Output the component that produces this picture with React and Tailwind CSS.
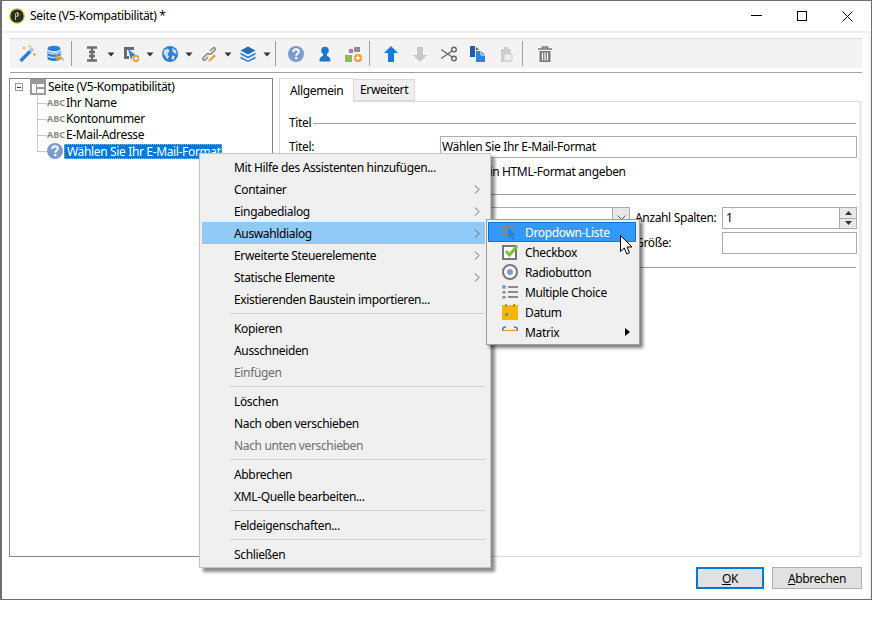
import React from "react";

const Svg = ({ children, w = 16, h = 16, className = "" }) => (
  <svg width={w} height={h} viewBox={`0 0 ${w} ${h}`} className={`block shrink-0 ${className}`}>{children}</svg>
);

const Caret = () => (
  <Svg w={8} h={5} className="mt-px"><path d="M0.5 0.5H7.5L4 4.5Z" fill="#333" /></Svg>
);

const Sep = ({ ml }) => <div className={`w-px h-[25px] bg-[#a0a0a0] shrink-0 ${ml}`} />;

const Wand = () => (
  <Svg w={18} h={18}>
    <path d="M1.5 16L11.5 6" stroke="#2b7cd3" strokeWidth="3.4" />
    <path d="M11 6.5L14 3.5" stroke="#9fc6ee" strokeWidth="3.4" />
    <path d="M5 1.5v3M3.5 3h3M15.5 8v3M14 9.5h3M11 0.5v2M10 1.5h2" stroke="#f0a23a" strokeWidth="1" />
  </Svg>
);
const DbBack = () => (
  <Svg w={18} h={18}>
    <ellipse cx="7" cy="3.5" rx="6.5" ry="2.8" fill="#2d7fd0" />
    <path d="M0.5 5V13.5C0.5 15 3.5 16 7 16S13.5 15 13.5 13.5V5C13 7 10 7.8 7 7.8S1 7 0.5 5Z" fill="#2d7fd0" />
    <path d="M1 7.5C3 9.5 11 9.5 13 7.5M1 11C3 13 11 13 13 11" stroke="#fff" strokeWidth="1" fill="none" />
    <path d="M17 16.5C17 12.5 14 11.5 11 11.5V9L7 12.5L11 16V13.8C13.5 13.8 15.5 14.5 17 16.5Z" fill="#ef9a2d" />
  </Svg>
);
const IBeam = () => (
  <Svg><path d="M3 1.5H13M3 14.5H13M8 1.5V14.5M5 6H11M5 10H11" stroke="#6d6d6d" strokeWidth="2.4" fill="none" /></Svg>
);
const Widget = () => (
  <Svg>
    <path d="M1 1H11V4H4V10H6V13H1Z" fill="#6a6a6a" />
    <path d="M5 3L13 9.5L9.5 10L8 14Z" fill="#2d7fd0" />
    <circle cx="13" cy="12.5" r="2.6" fill="none" stroke="#ef9a2d" strokeWidth="1.8" />
  </Svg>
);
const Globe = () => (
  <Svg>
    <circle cx="8" cy="8" r="8" fill="#2d7fd0" />
    <path d="M2 4L6 2.5L7.5 5L5.5 8L7 11L5 13.5L3.5 10L1.5 8ZM10 2L14 4.5L14.5 8L12 7L10.5 5ZM10 9.5L13 10L11.5 14L9.5 13Z" fill="#cfe2f5" />
  </Svg>
);
const LinkIcon = () => (
  <Svg>
    <path d="M9 5L12 2C13.2 1 15 2.8 14 4L10.5 7.5C9.5 8.5 8.5 8 8 7.5M7 11L4 14C2.8 15 1 13.2 2 12L5.5 8.5C6.5 7.5 7.5 8 8 8.5" stroke="#8a8a8a" strokeWidth="1.6" fill="none" />
    <path d="M7 15L13 8.5L15 10L9 15.5Z" fill="#ef9a2d" />
  </Svg>
);
const Layers = () => (
  <Svg>
    <path d="M8 0.5L15.5 4.5L8 8.5L0.5 4.5Z" fill="#1f6fb8" />
    <path d="M0.5 6.5L8 10.5L15.5 6.5V8.5L8 12.5L0.5 8.5Z" fill="#2d7fd0" />
    <path d="M0.5 10.5L8 14.5L15.5 10.5V12.5L8 16L0.5 12.5Z" fill="#2d7fd0" />
  </Svg>
);
const Help = () => (
  <Svg>
    <circle cx="8" cy="8" r="8" fill="#7c9dcb" />
    <path d="M5.3 6C5.3 4 6.5 3.2 8 3.2S10.8 4.1 10.8 5.8C10.8 7.6 8.2 7.6 8.2 9.8" stroke="#fff" strokeWidth="1.9" fill="none" />
    <rect x="7.1" y="11" width="2.2" height="2.2" fill="#fff" />
  </Svg>
);
const Person = () => (
  <Svg>
    <circle cx="8" cy="4.5" r="3.8" fill="#1f78c8" />
    <path d="M6 8H10V10C12 10.5 13.5 11.5 13.5 15.5H2.5C2.5 11.5 4 10.5 6 10Z" fill="#1f78c8" />
  </Svg>
);
const Shapes = () => (
  <Svg w={18} h={16}>
    <rect x="0" y="9" width="7" height="7" fill="#8cc04b" />
    <path d="M4 3H8V7H4Z" fill="#b06fd0" />
    <path d="M9 1H15V6H9Z" fill="#8e8e8e" />
    <circle cx="13" cy="12" r="4" fill="#ef9a2d" />
    <path d="M10.5 12H15.5M13 9.5V14.5" stroke="#fff" strokeWidth="1.4" />
  </Svg>
);
const Arrow = ({ color, down }) => (
  <Svg>
    <path d={down ? "M5 1H11V9H15L8 16L1 9H5Z" : "M8 0L15 7H11V16H5V7H1Z"} fill={color} />
  </Svg>
);
const Scissors = () => (
  <Svg>
    <circle cx="13" cy="3.5" r="2.3" fill="none" stroke="#666" strokeWidth="1.4" />
    <circle cx="13" cy="12.5" r="2.3" fill="none" stroke="#666" strokeWidth="1.4" />
    <path d="M0 3.5L11.2 11M0 12.5L11.2 5" stroke="#666" strokeWidth="1.4" />
  </Svg>
);
const Copy = () => (
  <Svg>
    <path d="M0 0H5V11H0Z" fill="#1f5fa8" />
    <path d="M6 1L9 4H6Z" fill="#1f5fa8" />
    <path d="M6 5H11L15 9V16H6Z" fill="#2d84d8" />
    <path d="M11 5V9H15" stroke="#fff" fill="none" />
  </Svg>
);
const Paste = () => (
  <Svg>
    <path d="M2 3H5V1H9V3H12V16H2Z" fill="#cdcdcd" />
    <path d="M5 8H13V15H5Z" fill="#eeeeee" stroke="#cdcdcd" />
  </Svg>
);
const Trash = () => (
  <Svg>
    <path d="M1 3H15M5.5 3V1H10.5V3" stroke="#7a7a7a" strokeWidth="1.6" fill="none" />
    <path d="M2.5 5H13.5V16H2.5Z" fill="#7a7a7a" />
    <path d="M5.5 6.5V14.5M8 6.5V14.5M10.5 6.5V14.5" stroke="#fff" strokeWidth="1.2" />
  </Svg>
);

const Slot = ({ children }) => <div className="w-[29px] flex justify-center shrink-0">{children}</div>;
const DropTool = ({ children }) => (
  <div className="flex items-center gap-[7px] w-[31px] shrink-0">{children}<Caret /></div>
);

const Toolbar = () => (
  <div className="ml-[8px] mr-[7px] mt-[5px] h-[30px] bg-[#f3f3f3] border-t border-[#d9d9d9] flex items-center pl-[3px]">
    <Slot><Wand /></Slot>
    <div className="-ml-px"><Slot><DbBack /></Slot></div>
    <Sep ml="ml-[1px]" />
    <div className="flex items-center gap-[8px] ml-[12px]">
      <DropTool><IBeam /></DropTool>
      <DropTool><Widget /></DropTool>
      <DropTool><Globe /></DropTool>
      <DropTool><LinkIcon /></DropTool>
      <DropTool><Layers /></DropTool>
    </div>
    <Sep ml="ml-[4px]" />
    <div className="flex items-center ml-[5px]">
      <Slot><Help /></Slot>
      <Slot><Person /></Slot>
      <Slot><Shapes /></Slot>
    </div>
    <Sep ml="ml-[1px]" />
    <div className="flex items-center ml-[6px]">
      <Slot><Arrow color="#1f78d1" /></Slot>
      <Slot><Arrow color="#c8c8c8" down /></Slot>
      <Slot><Scissors /></Slot>
      <Slot><Copy /></Slot>
      <Slot><Paste /></Slot>
    </div>
    <Sep ml="ml-[1px]" />
    <div className="ml-[7px]"><Slot><Trash /></Slot></div>
  </div>
);

const Abc = () => (
  <span className="w-[16px] text-[9px] font-bold text-[#8a8a8a] tracking-[0px] shrink-0 leading-[16px]">ABC</span>
);

const TreeIcon = () => (
  <svg width="16" height="16" viewBox="0 0 16 16" className="block shrink-0">
    <rect width="16" height="16" fill="#999" />
    <rect x="2" y="5" width="12" height="9" fill="#fff" />
    <rect x="7" y="8" width="7" height="2" fill="#999" />
    <rect x="6" y="5" width="1" height="9" fill="#999" />
  </svg>
);

const Tree = () => (
  <div className="relative w-[264px] h-[479px] border border-[#828790] bg-white shrink-0">
    <div className="absolute left-[27px] top-[15px] w-px h-[57px] bg-[#c8c8c8]" />
    <div className="flex items-center h-[16px] pl-[5px]">
      <div className="w-[8px] h-[8px] border border-[#8e9fb5] flex items-center justify-center mr-[7px] shrink-0">
        <div className="w-[4px] h-px bg-[#333]" />
      </div>
      <TreeIcon />
      <span className="ml-[2px]">Seite (V5-Kompatibilität)</span>
    </div>
    {["Ihr Name", "Kontonummer", "E-Mail-Adresse"].map((t) => (
      <div key={t} className="flex items-center h-[16px] pl-[27px]">
        <div className="w-[10px] h-px bg-[#c8c8c8] shrink-0" />
        <Abc />
        <span className="ml-[3px]">{t}</span>
      </div>
    ))}
    <div className="flex items-center h-[16px] pl-[27px]">
      <div className="w-[10px] h-px bg-[#c8c8c8] shrink-0" />
      <Help />
      <span className="ml-px h-[15px] leading-[13px] pl-[2px] w-[158px] shrink-0 bg-[#0078d7] text-white border border-dotted border-[#ffffff80] whitespace-nowrap">Wählen Sie Ihr E-Mail-Format</span>
    </div>
  </div>
);

const Legend = ({ children, className = "" }) => (
  <div className={`flex items-center gap-[2px] mr-[3px] ${className}`}>
    <span>{children}</span>
    <div className="flex-1 h-px bg-[#a0a0a0]" />
  </div>
);

const Field = ({ children, className = "" }) => (
  <div className={`h-[22px] border border-[#ababab] bg-white pl-[1px] leading-[19px] ${className}`}>{children}</div>
);

const Panel = () => (
  <div className="flex-1 flex flex-col min-w-0">
    <div className="flex items-end h-[24px] -mb-px relative z-10">
      <div className="w-[75px] h-[24px] bg-white border border-b-0 border-[#d9d9d9] pl-[10px] leading-[23px]">Allgemein</div>
      <div className="w-[61px] h-[22px] bg-[#f0f0f0] border border-l-0 border-[#d9d9d9] pl-[6px] leading-[20px] mb-px">Erweitert</div>
    </div>
    <div className="h-[456px] border border-[#d9d9d9] border-r-[3px] border-r-[#ececec] bg-white pl-[9px] pt-[13px]">
      <Legend className="h-[16px]">Titel</Legend>
      <div className="flex items-center h-[22px] mt-[5px] mr-[2px]">
        <span className="w-[151px]">Titel:</span>
        <Field className="flex-1">Wählen Sie Ihr E-Mail-Format</Field>
      </div>
      <div className="h-[16px] mt-[5px] pl-[151px]">
        <span className="pl-[25px]">Text in HTML-Format angeben</span>
      </div>
      <div className="h-px bg-[#a0a0a0] mt-[15px] mr-[3px]" />
      <div className="flex items-center h-[22px] mt-[12px] mr-[2px]">
        <Field className="flex-1 relative mr-[5px] ml-[151px]">
          <div className="absolute right-0 top-0 bottom-0 w-[17px] bg-[#e8e8e8] border-l border-[#ababab] flex items-center justify-center">
            <svg width="9" height="6" viewBox="0 0 9 6"><path d="M0.5 0.5L4.5 4.5L8.5 0.5" stroke="#555" fill="none" /></svg>
          </div>
        </Field>
        <span className="w-[87px] shrink-0">Anzahl Spalten:</span>
        <Field className="w-[135px] shrink-0 relative pl-[3px]">
          1
          <div className="absolute right-0 top-0 bottom-0 w-[17px] flex flex-col border-l border-[#ababab] bg-[#e8e8e8]">
            <div className="flex-1 flex items-center justify-center border-b border-[#ababab]">
              <svg width="7" height="4" viewBox="0 0 7 4"><path d="M3.5 0L7 4H0Z" fill="#333" /></svg>
            </div>
            <div className="flex-1 flex items-center justify-center">
              <svg width="7" height="4" viewBox="0 0 7 4"><path d="M0 0H7L3.5 4Z" fill="#333" /></svg>
            </div>
          </div>
        </Field>
      </div>
      <div className="flex items-center h-[22px] mt-[3px] mr-[2px] justify-end">
        <span className="w-[87px] shrink-0">Größe:</span>
        <Field className="w-[135px] shrink-0" />
      </div>
      <div className="h-px bg-[#a0a0a0] mt-[13px] mr-[3px]" />
    </div>
  </div>
);

const Chevron = () => (
  <svg width="6" height="9" viewBox="0 0 6 9" className="absolute left-[272px] top-[7px]">
    <path d="M1 0.5L5 4.5L1 8.5" stroke="#666" fill="none" />
  </svg>
);

const MenuItem = ({ label, sub, disabled, active }) => (
  <div className={`relative h-[22px] leading-[24px] pl-[32px] ${active ? "bg-[#91c9f7]" : ""} ${disabled ? "text-[#6d6d6d]" : ""}`}>
    {label}
    {sub && <Chevron />}
  </div>
);
const MenuSep = () => <div className="ml-[28px] h-px bg-[#d0d0d0] my-[3px]" />;

const ContextMenu = () => (
  <div className="absolute left-[199px] top-[153px] w-[292px] h-[415px] bg-[#f0f0f0] border border-[#c4c4c4] pl-[2px] pr-[5px] pt-[2px] shadow-[4px_4px_3px_rgba(0,0,0,0.45)] z-20">
    <MenuItem label="Mit Hilfe des Assistenten hinzufügen..." />
    <MenuItem label="Container" sub />
    <MenuItem label="Eingabedialog" sub />
    <MenuItem label="Auswahldialog" sub active />
    <MenuItem label="Erweiterte Steuerelemente" sub />
    <MenuItem label="Statische Elemente" sub />
    <MenuItem label="Existierenden Baustein importieren..." />
    <MenuSep />
    <MenuItem label="Kopieren" />
    <MenuItem label="Ausschneiden" />
    <MenuItem label="Einfügen" disabled />
    <MenuSep />
    <MenuItem label="Löschen" />
    <MenuItem label="Nach oben verschieben" />
    <MenuItem label="Nach unten verschieben" disabled />
    <MenuSep />
    <MenuItem label="Abbrechen" />
    <MenuItem label="XML-Quelle bearbeiten..." />
    <MenuSep />
    <MenuItem label="Feldeigenschaften..." />
    <MenuSep />
    <MenuItem label="Schließen" />
  </div>
);

const SubIcons = {
  drop: (
    <Svg>
      <path d="M1 1H12V6H10V3H3V10H6V12H1Z" fill="#8f8375" />
      <path d="M6 4L14 11L10.5 11.5L12.5 15.5L10.5 16L8.5 12L6 14.5Z" fill="#2d7fd0" />
    </Svg>
  ),
  check: (
    <Svg>
      <rect x="1" y="2" width="13" height="13" fill="#fff" stroke="#777" strokeWidth="2" />
      <path d="M4 7L7.5 11L15 2" stroke="#7cc03c" strokeWidth="3" fill="none" />
    </Svg>
  ),
  radio: (
    <Svg>
      <circle cx="8" cy="8" r="7" fill="#fff" stroke="#777" strokeWidth="2" />
      <circle cx="8" cy="8" r="3" fill="#7c9dcb" />
    </Svg>
  ),
  multi: (
    <Svg>
      <circle cx="2" cy="3" r="2" fill="#7c9dcb" />
      <rect x="0.5" y="7" width="3" height="2.5" fill="#8a8a8a" />
      <rect x="0.5" y="12" width="3" height="2.5" fill="#8a8a8a" />
      <path d="M6 3H16M6 8H16M6 13H16" stroke="#8a8a8a" strokeWidth="2" />
    </Svg>
  ),
  date: (
    <Svg>
      <rect y="1" width="16" height="15" fill="#efb900" />
      <rect x="3" y="0" width="2" height="3" fill="#c98f00" />
      <rect x="11" y="0" width="2" height="3" fill="#c98f00" />
      <rect x="3" y="9" width="3" height="3" fill="#5f8fd0" />
    </Svg>
  ),
  matrix: (
    <Svg>
      <path d="M0.8 7V4.5C0.8 3.8 1.5 3.2 4 3M15.2 7V4.5C15.2 3.8 14.5 3.2 12 3" stroke="#2d7fd0" strokeWidth="1.5" fill="none" />
      <path d="M2 6.5H14" stroke="#ef9a2d" strokeWidth="1.2" />
    </Svg>
  ),
};

const SubItem = ({ icon, label, active, arrow }) => (
  <div className={`relative h-[20px] flex items-center ${active ? "bg-[#3399ff] outline outline-1 outline-[#0078d7] -outline-offset-1 text-white" : ""}`}>
    <div className="ml-[14px] w-[16px] shrink-0">{SubIcons[icon]}</div>
    <span className="ml-[7px] pt-[2px]">{label}</span>
    {arrow && (
      <svg width="5" height="8" viewBox="0 0 5 8" className="absolute left-[137px] top-[6px]"><path d="M0 0L5 4L0 8Z" fill="#000" /></svg>
    )}
  </div>
);

const SubMenu = () => (
  <div className="absolute left-[486px] top-[219px] w-[154px] h-[126px] bg-[#f0f0f0] border border-[#a0a0a0] pl-[1px] pr-[3px] pt-[2px] shadow-[3px_3px_3px_rgba(0,0,0,0.5)] z-30">
    <SubItem icon="drop" label="Dropdown-Liste" active />
    <SubItem icon="check" label="Checkbox" />
    <SubItem icon="radio" label="Radiobutton" />
    <SubItem icon="multi" label="Multiple Choice" />
    <SubItem icon="date" label="Datum" />
    <SubItem icon="matrix" label="Matrix" arrow />
  </div>
);

const Cursor = () => (
  <svg width="13" height="20" viewBox="0 0 13 20" className="absolute left-[620px] top-[235px] z-40">
    <path d="M0.5 0.5V16.5L4.3 13L6.8 19L9.5 17.8L7 12H12Z" fill="#fff" stroke="#000" strokeWidth="1" />
  </svg>
);

export default function App() {
  return (
    <div className="relative w-[889px] h-[617px] bg-white overflow-hidden text-[12px] text-black font-['Noto_Sans','Open_Sans',sans-serif] tracking-[-0.35px]">
      <div className="w-[872px] h-[600px] border border-[#6e6e6e] border-l-2 bg-white flex flex-col">
        <div className="h-[30px] flex items-center shrink-0">
          <svg width="16" height="16" viewBox="0 0 16 16" className="ml-[7px]">
            <circle cx="8" cy="8" r="7.2" fill="#2c2c22" stroke="#b8d020" strokeWidth="1.2" />
            <path d="M6.5 12V6C6.5 4.5 10 4.5 10 6.5S7 8.5 7 8.5M8.5 4V9" stroke="#c9b98a" strokeWidth="1" fill="none" />
          </svg>
          <span className="ml-[5px]">Seite (V5-Kompatibilität) *</span>
          <div className="ml-auto flex items-center">
            <svg width="11" height="2" viewBox="0 0 11 2" className="mr-[35px]"><rect width="11" height="1" fill="#000" /></svg>
            <svg width="10" height="10" viewBox="0 0 10 10" className="mr-[35px]"><rect x="0.5" y="0.5" width="9" height="9" fill="none" stroke="#000" /></svg>
            <svg width="11" height="11" viewBox="0 0 11 11" className="mr-[18px]"><path d="M0.5 0.5L10.5 10.5M10.5 0.5L0.5 10.5" stroke="#000" /></svg>
          </div>
        </div>
        <div className="flex-1 border-t-2 border-[#f0f0f0] border-r-2 border-r-[#f4f4f4] flex flex-col min-h-0">
          <Toolbar />
          <div className="ml-[8px] mr-[7px] h-px bg-[#a0a0a0] mt-[4px]" />
          <div className="flex gap-[6px] ml-[7px] mr-[7px] mt-[5px]">
            <Tree />
            <Panel />
          </div>
          <div className="flex justify-end gap-[8px] mr-[7px] mt-[10px]">
            <button className="w-[68px] h-[22px] bg-[#e1e1e1] border-2 border-[#0078d7] leading-[17px]"><span className="underline">O</span>K</button>
            <button className="w-[90px] h-[22px] bg-[#e1e1e1] border border-[#adadad] leading-[19px]"><span className="underline">A</span>bbrechen</button>
          </div>
        </div>
      </div>
      <ContextMenu />
      <SubMenu />
      <Cursor />
    </div>
  );
}
